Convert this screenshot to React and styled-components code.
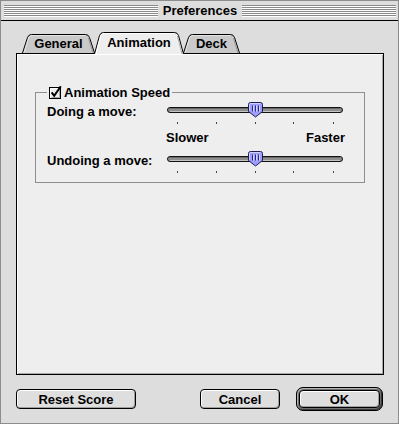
import React from "react";
import styled, { createGlobalStyle } from "styled-components";

const GlobalStyle = createGlobalStyle`
  html, body {
    margin: 0;
    padding: 0;
    background: #dddddd;
  }
  body {
    font-family: "Liberation Sans", Arial, sans-serif;
    font-size: 13px;
    font-weight: bold;
    color: #000;
  }
`;

const Window = styled.div`
  width: 399px;
  height: 424px;
  box-sizing: border-box;
  border: 1px solid #8c8c8c;
  background: #dddddd;
  display: flex;
  flex-direction: column;
`;

const TitleBar = styled.div`
  height: 19px;
  border-bottom: 1px solid #000;
  display: flex;
  align-items: center;
  padding: 0 2px 0 3px;
  gap: 4px;
`;

const Stripes = styled.div`
  flex: 1;
  height: 12px;
  background: repeating-linear-gradient(
    to bottom,
    #8a8a8a 0,
    #8a8a8a 1px,
    #ffffff 1px,
    #ffffff 2px
  );
`;

const Title = styled.div`
  line-height: 15px;
  padding: 0 1px;
`;

const Body = styled.div`
  flex: 1;
  display: flex;
  flex-direction: column;
  padding: 11px 14px 0 15px;
`;

const TabRow = styled.div`
  position: relative;
  z-index: 1;
  display: flex;
  align-items: flex-end;
  height: 22px;
  margin: 0 0 -1px 6px;
`;

const Tab = styled.div`
  display: grid;
  width: ${(p) => p.$w}px;
  height: ${(p) => (p.$active ? 22 : 20)}px;
  margin-left: ${(p) => (p.$first ? 0 : -1)}px;
  position: relative;
  z-index: ${(p) => (p.$active ? 1 : 0)};
  & > * {
    grid-area: 1 / 1;
  }
`;

const TabLabel = styled.span`
  align-self: start;
  justify-self: center;
  padding-top: ${(p) => (p.$active ? 3 : 2)}px;
  line-height: 15px;
  white-space: nowrap;
`;

const Panel = styled.div`
  height: 322px;
  box-sizing: border-box;
  border: 1px solid #000;
  background: #eeeeee;
  box-shadow: inset 1px 1px 0 #ffffff, inset -1px -1px 0 #a8a8a8;
  display: flex;
  flex-direction: column;
`;

const Group = styled.fieldset`
  margin: 29px 18px 0 18px;
  padding: 1px 0 9px 11px;
  border: 1px solid #8e8e8e;
  min-width: 0;
`;

const GroupTitle = styled.legend`
  display: flex;
  align-items: center;
  gap: 2px;
  height: 18px;
  padding: 0 2px;
  line-height: 15px;
  white-space: nowrap;
`;

const SpeedGrid = styled.div`
  display: grid;
  grid-template-columns: 120px 176px;
  grid-template-rows: 22px 15px 22px;
  row-gap: 6px;
`;

const RowLabel = styled.div`
  padding-top: 2px;
  line-height: 15px;
  white-space: nowrap;
`;

const Scale = styled.div`
  grid-column: 2;
  display: flex;
  justify-content: space-between;
  margin: 0 -2px 0 -1px;
  line-height: 15px;
`;

const ButtonRow = styled.div`
  display: flex;
  align-items: center;
  gap: 16px;
  height: 24px;
  margin-top: 12px;
`;

const Button = styled.button`
  width: ${(p) => p.$w}px;
  height: ${(p) => p.$h || 20}px;
  box-sizing: border-box;
  border: 1px solid #000;
  border-radius: 4px;
  padding: 0;
  background: #dedede;
  box-shadow: inset 1px 1px 0 #ffffff, inset -1px -1px 0 #a0a0a0;
  font: inherit;
  line-height: 15px;
  color: #000;
  margin-right: ${(p) => (p.$push ? "auto" : "0")};
`;

const DefaultRing = styled.div`
  display: flex;
  border: 1px solid #000;
  border-radius: 7px;
  padding: 2px;
  margin-right: 1px;
  background: #6e6e6e;
  box-shadow: inset 1px 1px 0 #b4b4b4, inset -1px -1px 0 #3a3a3a;
`;

const tabOutline = (w, h) =>
  `M0.5,${h} L5.5,3.5 Q6.5,0.5 9.5,0.5 H${w - 9.5} Q${w - 6.5},0.5 ${w - 5.5},3.5 L${w - 0.5},${h}`;

const TabShape = ({ w, active }) => {
  const full = active ? 22 : 20;
  const h = active ? full : full - 1;
  return (
    <svg width={w} height={full} viewBox={`0 0 ${w} ${full}`}>
      <path d={tabOutline(w, h)} fill={active ? "#eeeeee" : "#c9c9c9"} stroke="#000" />
      <path
        d={`M2,${h} L6.7,4 Q7.6,1.5 10,1.5 H${w - 10}`}
        fill="none"
        stroke={active ? "#ffffff" : "#e4e4e4"}
      />
      <path d={`M${w - 6.6},4 L${w - 2},${h}`} fill="none" stroke={active ? "#b0b0b0" : "#9a9a9a"} />
    </svg>
  );
};

const tabs = [
  { label: "General", w: 73 },
  { label: "Animation", w: 90, active: true },
  { label: "Deck", w: 57 },
];

const CheckBox = () => (
  <svg width="13" height="14" viewBox="0 0 13 14">
    <rect x="0.5" y="2.5" width="11" height="11" fill="#eeeeee" stroke="#000" />
    <path d="M1.5 12.5 V3.5 H10.5" stroke="#ffffff" fill="none" />
    <path d="M2.5 12.5 H10.5 V4.5" stroke="#a8a8a8" fill="none" />
    <path d="M2.6 7.4 L5.2 10.8 L11.8 1.2" stroke="#000" strokeWidth="2" fill="none" />
  </svg>
);

const TICKS = [10, 49, 88, 126, 166];

const Slider = ({ value }) => {
  const left = Math.round(value * 161);
  return (
    <svg width="176" height="22" viewBox="0 0 176 22">
      <rect x="0.5" y="5.5" width="175" height="5" rx="2.5" fill="#8e8e8e" stroke="#111" />
      <path d="M3 9.5 H173" stroke="#c4c4c4" />
      <path d="M3 6.5 H173" stroke="#6a6a6a" />
      {TICKS.map((t) => (
        <rect key={t} x={t} y="20" width="1" height="2" fill="#444" />
      ))}
      <g transform={`translate(${left} 0)`}>
        <path
          d="M0.5,2.5 Q0.5,0.5 2.5,0.5 H12.5 Q14.5,0.5 14.5,2.5 V9.5 L7.5,15 L0.5,9.5 Z"
          fill="#9d9dfc"
          stroke="#1e1e55"
        />
        <path d="M1.5,9 V2.5 Q1.5,1.5 2.5,1.5 H12.5" fill="none" stroke="#d0d0ff" />
        <path d="M4.5 3.5 V9.5 M7.5 3.5 V9.5 M10.5 3.5 V9.5" stroke="#2a2a80" />
        <path d="M5.5 3.5 V9.5 M8.5 3.5 V9.5 M11.5 3.5 V9.5" stroke="#d4d4ff" />
      </g>
    </svg>
  );
};

export default function App() {
  return (
    <>
      <GlobalStyle />
      <Window>
        <TitleBar>
          <Stripes />
          <Title>Preferences</Title>
          <Stripes />
        </TitleBar>
        <Body>
          <TabRow>
            {tabs.map((t, i) => (
              <Tab key={t.label} $w={t.w} $active={t.active} $first={i === 0}>
                <TabShape w={t.w} active={t.active} />
                <TabLabel $active={t.active}>{t.label}</TabLabel>
              </Tab>
            ))}
          </TabRow>
          <Panel>
            <Group>
              <GroupTitle>
                <CheckBox />
                <span>Animation Speed</span>
              </GroupTitle>
              <SpeedGrid>
                <RowLabel>Doing a move:</RowLabel>
                <Slider value={0.5} />
                <Scale>
                  <span>Slower</span>
                  <span>Faster</span>
                </Scale>
                <RowLabel>Undoing a move:</RowLabel>
                <Slider value={0.5} />
              </SpeedGrid>
            </Group>
          </Panel>
          <ButtonRow>
            <Button $w={120} $push>
              Reset Score
            </Button>
            <Button $w={80}>Cancel</Button>
            <DefaultRing>
              <Button $w={81} $h={18}>
                OK
              </Button>
            </DefaultRing>
          </ButtonRow>
        </Body>
      </Window>
    </>
  );
}
